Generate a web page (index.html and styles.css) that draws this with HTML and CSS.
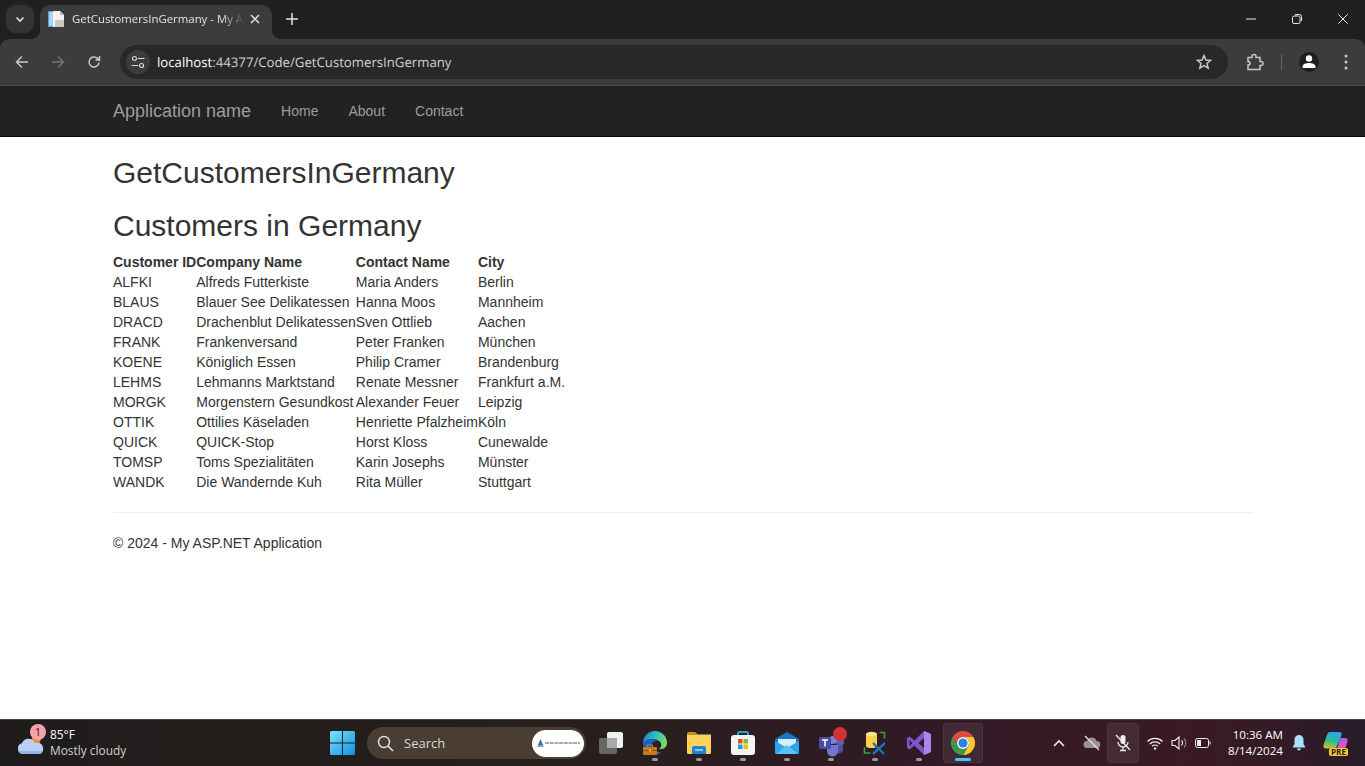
FILE: index.html
```html
<!DOCTYPE html>
<html lang="en">
<head>
    <meta charset="UTF-8">
    <meta name="viewport" content="width=device-width, initial-scale=1.0">
    <title>GetCustomersInGermany - My ASP.NET Application</title>
    <link rel="stylesheet" href="styles.css">
</head>
<body>

<header class="chrome">
<div class="tabstrip">
    <div class="tab-search">
        <svg width="12" height="12" viewBox="0 0 12 12"><path d="M2.5 4.5 6 8l3.500-3.500" fill="none" stroke="#e3e3e3" stroke-width="1.600"/></svg>
    </div>
    <div class="tab">
        <svg class="favicon" width="16" height="16" viewBox="0 0 16 16">
            <rect x="0" y="0" width="6" height="16" fill="#4a9fdc"/>
            <rect x="1" y="1" width="4" height="14" fill="#a9d3ef"/>
            <path d="M5 0h7l4 4v12H5z" fill="#f3f3f3"/>
            <path d="M7 9h9v7H7z" fill="#c9c9c9"/>
            <path d="M12 0v4h4z" fill="#bdbdbd"/>
        </svg>
        <span class="tab-title">GetCustomersInGermany - My ASP.NET Application</span>
        <svg class="tab-close" width="10" height="10" viewBox="0 0 10 10"><path d="M1 1l8 8M9 1l-8 8" stroke="#e3e3e3" stroke-width="1.500"/></svg>
    </div>
    <svg class="new-tab" width="12" height="12" viewBox="0 0 12 12"><path d="M6 0v12M0 6h12" stroke="#e3e3e3" stroke-width="1.500"/></svg>
    <div class="window-btns">
        <svg width="10" height="10" viewBox="0 0 10 10"><path d="M0 5h10" stroke="#e8e8e8" stroke-width="1"/></svg>
        <svg width="10" height="10" viewBox="0 0 10 10"><rect x=".5" y="2" width="7.500" height="7.500" rx="1.500" fill="none" stroke="#e8e8e8"/><path d="M3 .5h4.500a2 2 0 0 1 2 2V7" fill="none" stroke="#e8e8e8"/></svg>
        <svg width="10" height="10" viewBox="0 0 10 10"><path d="M.3.3l9.400 9.400M9.700.3.300 9.700" stroke="#e8e8e8" stroke-width="1"/></svg>
    </div>
</div>

<div class="toolbar">
    <svg class="nav-icon" width="14" height="14" viewBox="0 0 14 14"><path d="M13 7H2M7 1.500 1.500 7 7 12.500" fill="none" stroke="#c7c7c7" stroke-width="1.500"/></svg>
    <svg class="nav-icon" width="14" height="14" viewBox="0 0 14 14"><path d="M1 7h11M7 1.500 12.500 7 7 12.500" fill="none" stroke="#757575" stroke-width="1.500"/></svg>
    <svg class="nav-icon" width="14" height="14" viewBox="0 0 14 14"><path d="M12 7.500A5 5 0 1 1 10.500 3.400L12.500 5M12.500 1v4h-4" fill="none" stroke="#c7c7c7" stroke-width="1.500"/></svg>
    <div class="omnibox">
        <div class="site-info">
            <svg width="14" height="14" viewBox="0 0 14 14"><g fill="none" stroke="#dcdcdc" stroke-width="1.200"><circle cx="3.500" cy="3.500" r="2"/><path d="M7 3.500h6.500M.5 10.500H7"/><circle cx="10.500" cy="10.500" r="2"/></g></svg>
        </div>
        <div class="url"><span class="url-host">localhost</span>:44377/Code/GetCustomersInGermany</div>
        <svg class="star" width="16" height="16" viewBox="0 0 16 16"><path d="M8 1.500 9.900 6l4.800.4-3.700 3.100 1.200 4.700L8 11.700l-4.200 2.500L5 9.500 1.300 6.400 6.100 6z" fill="none" stroke="#c7c7c7" stroke-width="1.500"/></svg>
    </div>
    <svg class="ext" width="18" height="18" viewBox="0 0 18 18"><path d="M2 4h4V3a2 2 0 0 1 4 0v1h4v4h1a2 2 0 0 1 0 4h-1v4H2v-4.500h1a2 2 0 0 0 0-3.500H2z" fill="none" stroke="#c7c7c7" stroke-width="1.500" transform="translate(0 .500)"/></svg>
    <div class="sep"></div>
    <div class="avatar">
        <svg width="20" height="20" viewBox="0 0 20 20"><circle cx="10" cy="6.500" r="3.200" fill="#fff"/><path d="M3.500 16v-1.500C3.500 12 7 11 10 11s6.500 1 6.500 3.500V16z" fill="#fff"/></svg>
    </div>
    <svg class="menu" width="4" height="16" viewBox="0 0 4 16"><circle cx="2" cy="2" r="1.500" fill="#c7c7c7"/><circle cx="2" cy="8" r="1.500" fill="#c7c7c7"/><circle cx="2" cy="14" r="1.500" fill="#c7c7c7"/></svg>
</div>
</header>

<nav class="navbar">
    <div class="container navbar-inner">
        <a class="brand">Application name</a>
        <a class="nav-link">Home</a>
        <a class="nav-link">About</a>
        <a class="nav-link">Contact</a>
    </div>
</nav>

<main class="container body-content">
    <h2>GetCustomersInGermany</h2>
    <h2>Customers in Germany</h2>
    <table>
        <thead>
            <tr><th>Customer ID</th><th>Company Name</th><th>Contact Name</th><th>City</th></tr>
        </thead>
        <tbody>
            <tr><td>ALFKI</td><td>Alfreds Futterkiste</td><td>Maria Anders</td><td>Berlin</td></tr>
            <tr><td>BLAUS</td><td>Blauer See Delikatessen</td><td>Hanna Moos</td><td>Mannheim</td></tr>
            <tr><td>DRACD</td><td>Drachenblut Delikatessen</td><td>Sven Ottlieb</td><td>Aachen</td></tr>
            <tr><td>FRANK</td><td>Frankenversand</td><td>Peter Franken</td><td>München</td></tr>
            <tr><td>KOENE</td><td>Königlich Essen</td><td>Philip Cramer</td><td>Brandenburg</td></tr>
            <tr><td>LEHMS</td><td>Lehmanns Marktstand</td><td>Renate Messner</td><td>Frankfurt a.M.</td></tr>
            <tr><td>MORGK</td><td>Morgenstern Gesundkost</td><td>Alexander Feuer</td><td>Leipzig</td></tr>
            <tr><td>OTTIK</td><td>Ottilies Käseladen</td><td>Henriette Pfalzheim</td><td>Köln</td></tr>
            <tr><td>QUICK</td><td>QUICK-Stop</td><td>Horst Kloss</td><td>Cunewalde</td></tr>
            <tr><td>TOMSP</td><td>Toms Spezialitäten</td><td>Karin Josephs</td><td>Münster</td></tr>
            <tr><td>WANDK</td><td>Die Wandernde Kuh</td><td>Rita Müller</td><td>Stuttgart</td></tr>
        </tbody>
    </table>
    <hr>
    <footer>&copy; 2024 - My ASP.NET Application</footer>
</main>

<div class="taskbar">
    <div class="weather">
        <div class="weather-icon">
            <svg width="28" height="22" viewBox="0 0 28 22"><circle cx="19" cy="6" r="4.500" fill="#e8883a"/><path d="M6 20a5.500 5.500 0 0 1-1-10.800A7 7 0 0 1 18 9a5.500 5.500 0 0 1 4.500 11z" fill="#b9d0f2"/><path d="M6 20c-2 0-4-1-5-3h25c-1 2-2 3-4 3z" fill="#8fb4e6"/></svg>
            <span class="badge">1</span>
        </div>
        <div class="weather-text">
            <div class="temp">85°F</div>
            <div class="cond">Mostly cloudy</div>
        </div>
    </div>
    <div class="start">
        <svg width="25" height="24" viewBox="0 0 25 24">
            <defs><linearGradient id="win" x1="0" y1="0" x2="1" y2="1"><stop offset="0" stop-color="#7ce3fb"/><stop offset="1" stop-color="#0f8fe6"/></linearGradient></defs>
            <path d="M0 1.500A1.500 1.500 0 0 1 1.500 0H12v11.500H0zM13 0h10.500A1.500 1.500 0 0 1 25 1.500v10H13zM0 12.500h12V24H1.500A1.500 1.500 0 0 1 0 22.500zM13 12.500h12v10a1.500 1.500 0 0 1-1.500 1.500H13z" fill="url(#win)"/>
        </svg>
    </div>
    <div class="search">
        <svg width="17" height="17" viewBox="0 0 17 17"><circle cx="7" cy="7" r="5.500" fill="none" stroke="#e6e6e6" stroke-width="1.400"/><path d="M11 11l5 5" stroke="#e6e6e6" stroke-width="1.600"/></svg>
        <span class="search-label">Search</span>
        <div class="search-pic">
            <svg width="44" height="10" viewBox="0 0 44 10"><path d="M4.500 1l2.500 6H2z" fill="#1d6fb8"/><path d="M1.500 7.500h6v1h-6z" fill="#1d3f7a"/><path d="M9 5h35" stroke="#555" stroke-width="1" stroke-dasharray="4 .7"/></svg>
        </div>
    </div>
    <div class="task-icons">
        <div class="task-icon">
            <svg width="24" height="22" viewBox="0 0 24 22"><rect x="0" y="6" width="18" height="16" rx="2" fill="#666"/><rect x="8" y="0" width="16" height="16" rx="2" fill="#f1f1f1"/><rect x="8" y="6" width="10" height="10" fill="#a8a8a8"/></svg>
        </div>
        <div class="task-icon open">
            <svg width="24" height="24" viewBox="0 0 24 24">
                <defs><linearGradient id="edge" x1="0" y1=".3" x2="1" y2=".5"><stop offset="0" stop-color="#1a7fd0"/><stop offset=".5" stop-color="#2cc3c0"/><stop offset="1" stop-color="#7fdc5a"/></linearGradient></defs>
                <path d="M0 12a12 12 0 0 1 24 0c0 4-4 7-8 6 3-2 3-6 0-8-4-3-11-3-16 2z" fill="url(#edge)"/>
                <path d="M0 12c4-5 11-5 14-2-4 0-6 3-5 6 1 3 5 5 9 5-3 3-6 3-6 3C5 24 0 18 0 12z" fill="#1565c0"/>
                <rect x="0" y="16" width="14" height="8" rx="1" fill="#c87a1e"/>
                <rect x="4.500" y="14" width="5" height="3" fill="none" stroke="#c87a1e"/>
                <path d="M0 19.500h14" stroke="#8f5210"/>
                <path d="M6 19.500h2" stroke="#f4c27a" stroke-width="1.600"/>
            </svg>
        </div>
        <div class="task-icon open">
            <svg width="24" height="22" viewBox="0 0 24 22"><path d="M0 1.500A1.500 1.500 0 0 1 1.500 0H8l3 2.500H0z" fill="#c98e14"/><path d="M0 2.500h24v18a1.500 1.500 0 0 1-1.500 1.500h-21A1.500 1.500 0 0 1 0 20.500z" fill="#fbd25a"/><path d="M7 14h10a2 2 0 0 1 2 2v6H5v-6a2 2 0 0 1 2-2z" fill="#1f86cc"/><rect x="8" y="17" width="8" height="2" fill="#7cc8f2"/></svg>
        </div>
        <div class="task-icon open">
            <svg width="24" height="24" viewBox="0 0 24 24"><path d="M7 5V2.500A1.500 1.500 0 0 1 8.500 1h7A1.500 1.500 0 0 1 17 2.500V5" fill="none" stroke="#29a3e0" stroke-width="2"/><rect x="0" y="4" width="24" height="20" rx="3" fill="#f4f4f4"/><rect x="7" y="8" width="4.500" height="4.500" fill="#e8492b"/><rect x="12.500" y="8" width="4.500" height="4.500" fill="#7db82d"/><rect x="7" y="13.500" width="4.500" height="4.500" fill="#1e9be0"/><rect x="12.500" y="13.500" width="4.500" height="4.500" fill="#f7b90f"/></svg>
        </div>
        <div class="task-icon open">
            <svg width="24" height="22" viewBox="0 0 24 22"><path d="M0 7 12 0l12 7v13.500a1.500 1.500 0 0 1-1.500 1.500h-21A1.500 1.500 0 0 1 0 20.500z" fill="#1478c8"/><path d="M3 7h18v6l-9 5-9-5z" fill="#d4eefa"/><path d="M0 9l12 7 12-7v11.500a1.500 1.500 0 0 1-1.500 1.500h-21A1.500 1.500 0 0 1 0 20.500z" fill="#2aa4ea"/><path d="M1 22 12 13l11 9z" fill="#5cc3f5"/></svg>
        </div>
        <div class="task-icon open">
            <svg width="32" height="32" viewBox="0 0 32 32"><circle cx="25" cy="15" r="4" fill="#5d5fb5"/><circle cx="18" cy="13" r="4" fill="#7b83d4"/><path d="M21 19h7v4a4 4 0 0 1-7 2z" fill="#4f519f"/><path d="M12 18h11v6a5.500 5.500 0 0 1-11 0z" fill="#7276cc"/><rect x="4" y="10" width="12" height="12" rx="1.500" fill="#4a4da6"/><path d="M7 13h6M10 13v6.500" stroke="#fff" stroke-width="1.500"/><circle cx="25" cy="7" r="7" fill="#d13438"/></svg>
        </div>
        <div class="task-icon open">
            <svg width="24" height="24" viewBox="0 0 24 24"><path d="M3 3h11v12H3z" fill="#f7d34a"/><ellipse cx="8.500" cy="3" rx="5.500" ry="2.200" fill="#f9e58a"/><ellipse cx="8.500" cy="15" rx="5.500" ry="2" fill="#f7d34a"/><path d="M16.500 1.500h5v6M1.500 16v6h6" fill="none" stroke="#2f9e44" stroke-width="1.600"/><path d="M10 12l11 11M22 12 10 23" stroke="#1d6fb8" stroke-width="2.400"/></svg>
        </div>
        <div class="task-icon open">
            <svg width="24" height="24" viewBox="0 0 24 24"><path fill-rule="evenodd" d="M17 0l7 3v18l-7 3-9.500-9.500L2.500 18.500 0 17V7l2.500-1.500 5 4zM17 7l-5.500 5 5.500 5zM2.500 9v6l3-3z" fill="#7d55c8"/><path fill-rule="evenodd" d="M17 0l7 3v18l-7 3z" fill="#ab85ee"/></svg>
        </div>
        <div class="task-icon active">
            <svg width="24" height="24" viewBox="0 0 24 24"><path d="M12 6h10.400A12 12 0 0 0 1.600 6l5.200 9A6 6 0 0 1 12 6z" fill="#dd4b3a"/><path d="M22.400 6A12 12 0 0 1 12 24l5.200-9A6 6 0 0 0 12 6z" fill="#f7c631"/><path d="M12 24A12 12 0 0 1 1.600 6l5.200 9a6 6 0 0 0 10.400 0z" fill="#3b9a4a"/><circle cx="12" cy="12" r="6" fill="#fff"/><circle cx="12" cy="12" r="4.600" fill="#2f7fe6"/></svg>
        </div>
    </div>
    <div class="tray">
        <svg width="12" height="8" viewBox="0 0 12 8"><path d="M1 7l5-5 5 5" fill="none" stroke="#eee" stroke-width="1.600"/></svg>
        <svg class="tray-cloud" width="18" height="16" viewBox="0 0 18 16"><path d="M4 13a3.500 3.500 0 0 1 0-7 5 5 0 0 1 9.500 0 3.500 3.500 0 0 1 .5 7z" fill="#9a9292"/><path d="M2 1l14 14" stroke="#e8e8e8" stroke-width="1.300"/></svg>
        <div class="tray-mic">
            <svg width="16" height="18" viewBox="0 0 16 18"><rect x="5.500" y="1" width="5" height="9" rx="2.500" fill="#eee"/><path d="M3 8a5 5 0 0 0 10 0M8 13v3M5 16.500h6" fill="none" stroke="#eee" stroke-width="1.300"/><path d="M1 1l14 15" stroke="#eee" stroke-width="1.300"/></svg>
        </div>
        <svg class="tray-wifi" width="16" height="13" viewBox="0 0 16 13"><g fill="none" stroke="#eee" stroke-width="1.200"><path d="M.5 4.500a10.500 10.500 0 0 1 15 0M2.800 7a7.200 7.200 0 0 1 10.400 0M5.200 9.300a4 4 0 0 1 5.600 0"/></g><circle cx="8" cy="11.500" r="1.200" fill="#eee"/></svg>
        <svg class="tray-vol" width="17" height="14" viewBox="0 0 17 14"><path d="M1 4.500h3L8 1v12L4 9.500H1z" fill="none" stroke="#eee" stroke-width="1.100"/><path d="M10.500 4.500a3.500 3.500 0 0 1 0 5" fill="none" stroke="#eee" stroke-width="1.100"/><path d="M13 2.500a6.500 6.500 0 0 1 0 9" fill="none" stroke="#888" stroke-width="1.100"/></svg>
        <svg class="tray-bat" width="16" height="10" viewBox="0 0 16 10"><rect x=".5" y=".5" width="13" height="9" rx="2" fill="none" stroke="#eee"/><rect x="2" y="2" width="4" height="6" fill="#eee"/><path d="M14.500 3.500h1v3h-1z" fill="#eee"/></svg>
        <div class="clock">
            <div>10:36 AM</div>
            <div>8/14/2024</div>
        </div>
        <svg class="bell" width="14" height="16" viewBox="0 0 14 16"><path d="M7 0a4.500 4.500 0 0 1 4.500 4.500V9l2 3.500H.5l2-3.500V4.500A4.500 4.500 0 0 1 7 0z" fill="#a8e2fb"/><path d="M5 13.500h4a2 2 0 0 1-4 0z" fill="#a8e2fb"/></svg>
        <div class="copilot">
            <svg width="25" height="17" viewBox="0 0 25 17">
                <defs>
                    <linearGradient id="cop-left" x1=".5" y1="0" x2=".2" y2="1"><stop offset="0" stop-color="#27a9e8"/><stop offset=".55" stop-color="#2fc08a"/><stop offset="1" stop-color="#e8b52a"/></linearGradient>
                    <linearGradient id="cop-right" x1=".3" y1="0" x2=".8" y2="1"><stop offset="0" stop-color="#9a5df0"/><stop offset="1" stop-color="#f056b0"/></linearGradient>
                </defs>
                <path d="M7 0h9c2 0 3 1 2.500 3L14 14c-.5 1.500-2 2.500-3.500 2.500H3c-2 0-3-1.500-2.500-3.500L4 3C4.500 1 5.500 0 7 0z" fill="url(#cop-left)"/>
                <path d="M17 6h5c2 0 3 1.500 2.500 3.500l-1.500 5c-.5 1.500-2 2-3.500 2H12c1.500 0 2.500-1 3-2.500z" fill="url(#cop-right)"/>
            </svg>
            <span class="pre">PRE</span>
        </div>
    </div>
</div>

</body>
</html>
```

FILE: styles.css
```css
html, body {
    margin: 0;
    height: 100%;
    overflow: hidden;
}

body {
    display: flex;
    flex-direction: column;
    height: 766px;
    background: #fff;
    font-family: "Liberation Sans", Arial, sans-serif;
    font-size: 14px;
    line-height: 20px;
    color: #333;
}

/* browser chrome */
.chrome {
    flex: none;
    background: #1f2020;
    font-family: "Open Sans", sans-serif;
}

.tabstrip {
    display: flex;
    align-items: flex-start;
    height: 39px;
    padding: 5px 0 0 6px;
    box-sizing: border-box;
}

.tab-search {
    width: 28px;
    height: 28px;
    border-radius: 9px;
    background: #333534;
    display: flex;
    align-items: center;
    justify-content: center;
}

.tab {
    position: relative;
    display: flex;
    align-items: center;
    width: 232px;
    height: 34px;
    margin-left: 6px;
    padding: 0 10px 6px 8px;
    box-sizing: border-box;
    background: #3c3c3c;
    border-radius: 10px 10px 0 0;
}

.tab::before,
.tab::after {
    content: "";
    position: absolute;
    bottom: 0;
    width: 8px;
    height: 8px;
}

.tab::before {
    left: -8px;
    background: radial-gradient(circle at 0 0, transparent 7.500px, #3c3c3c 8px);
}

.tab::after {
    right: -8px;
    background: radial-gradient(circle at 100% 0, transparent 7.500px, #3c3c3c 8px);
}

.tab-title {
    flex: 1;
    margin-left: 8px;
    font-size: 11.400px;
    color: #e3e3e3;
    white-space: nowrap;
    overflow: hidden;
    -webkit-mask-image: linear-gradient(90deg, #000 150px, transparent 172px);
    mask-image: linear-gradient(90deg, #000 150px, transparent 172px);
}

.tab-close {
    margin: 0 2px 0 6px;
}

.new-tab {
    margin: 8px 0 0 14px;
}

.window-btns {
    display: flex;
    gap: 36px;
    margin: 9px 17px 0 auto;
    align-items: center;
}

.toolbar {
    display: flex;
    align-items: center;
    height: 47px;
    box-sizing: border-box;
    padding: 0 0 0 15px;
    background: #3c3c3c;
    border-radius: 9px 9px 0 0;
    border-bottom: 1px solid #4d4d4d;
}

.nav-icon {
    margin-right: 22px;
}

.nav-icon:nth-child(3) {
    margin-right: 19px;
}

.omnibox {
    display: flex;
    align-items: center;
    width: 1108px;
    height: 34px;
    background: #282828;
    border-radius: 17px;
    flex: none;
    padding: 0 16px 0 6px;
    box-sizing: border-box;
}

.site-info {
    width: 24px;
    height: 24px;
    border-radius: 50%;
    background: #3c3c3c;
    display: flex;
    align-items: center;
    justify-content: center;
}

.url {
    flex: 1;
    margin-left: 7px;
    font-size: 13.200px;
    text-rendering: geometricPrecision;
    color: #d0d0d0;
}

.url-host {
    color: #fff;
}

.ext {
    margin-left: 18px;
}

.sep {
    width: 1px;
    height: 16px;
    background: #666;
    margin-left: 17px;
}

.avatar {
    width: 20px;
    height: 20px;
    border-radius: 50%;
    background: #1f1f1f;
    margin-left: 17px;
    display: flex;
    align-items: center;
    justify-content: center;
}

.menu {
    margin-left: 25px;
}

/* page */
.container {
    width: 1140px;
    margin-left: 113px;
}

.navbar {
    height: 51px;
    flex: none;
    box-sizing: border-box;
    background: #222;
    border-bottom: 1px solid #080808;
}

.navbar-inner {
    display: flex;
    align-items: center;
    height: 50px;
}

.navbar a {
    color: #9d9d9d;
}

.brand {
    font-size: 18px;
    margin-right: 15px;
}

.nav-link {
    padding: 0 15px;
}

.body-content {
    flex: 1;
    overflow: hidden;
}

h2 {
    font-size: 30px;
    font-weight: 500;
    line-height: 33px;
    margin: 20px 0 10px;
}

.body-content h2:first-child {
    margin-top: 19px;
}

table {
    border-collapse: collapse;
    border-spacing: 0;
}

th, td {
    padding: 0;
    text-align: left;
}

hr {
    border: 0;
    border-top: 1px solid #eee;
    margin: 20px 0;
}

/* windows taskbar */
.taskbar {
    display: flex;
    align-items: center;
    height: 47px;
    flex: none;
    box-sizing: border-box;
    border-top: 1px solid #414141;
    background: linear-gradient(90deg, #1e1c1b 0%, #27201c 40%, #321a26 70%, #3a1a22 88%, #2a1c2a 100%);
    font-family: "Open Sans", sans-serif;
    color: #fff;
}

.weather {
    display: flex;
    align-items: center;
    width: 330px;
    flex: none;
    box-sizing: border-box;
    padding-left: 17px;
}

.weather-icon {
    position: relative;
    width: 28px;
    height: 22px;
    margin-top: 4px;
}

.badge {
    position: absolute;
    left: 13px;
    top: -10px;
    width: 16px;
    height: 16px;
    border-radius: 50%;
    background: #f7a1ab;
    color: #222;
    font-size: 11px;
    line-height: 16px;
    text-align: center;
}

.weather-text {
    margin: 0 0 2px 5px;
    font-size: 11.900px;
    line-height: 16px;
}

.cond {
    color: #d0d0d0;
}

.start {
    display: flex;
    width: 25px;
    flex: none;
}

.search {
    display: flex;
    align-items: center;
    width: 219px;
    height: 32px;
    margin-left: 12px;
    flex: none;
    box-sizing: border-box;
    padding: 0 2px 0 10px;
    border-radius: 16px;
    background: #4a3d33;
}

.search-label {
    margin-left: 10px;
    font-size: 13px;
    color: #d8d8d8;
    flex: 1;
}

.search-pic {
    width: 52px;
    height: 27px;
    border-radius: 14px;
    background: #fff;
    display: flex;
    align-items: center;
    justify-content: center;
}

.task-icons {
    display: flex;
    margin-left: 3px;
}

.task-icon {
    position: relative;
    display: flex;
    align-items: center;
    justify-content: center;
    width: 40px;
    height: 40px;
    margin: 0 2px;
    box-sizing: border-box;
}

.task-icon.open::after {
    content: "";
    position: absolute;
    left: 17px;
    bottom: 2px;
    width: 6px;
    height: 3px;
    border-radius: 2px;
    background: #9a9a9a;
}

.task-icon.active {
    background: rgba(255, 255, 255, 0.07);
    border: 1px solid rgba(255, 255, 255, 0.05);
    border-radius: 4px;
}

.task-icon.active::after {
    content: "";
    position: absolute;
    left: 11px;
    bottom: 1px;
    width: 16px;
    height: 3px;
    border-radius: 2px;
    background: #4cc2ff;
}

.tray {
    display: flex;
    align-items: center;
    margin-left: auto;
    padding-right: 17px;
}

.tray-cloud {
    margin-left: 18px;
}

.tray-mic {
    display: flex;
    align-items: center;
    justify-content: center;
    width: 32px;
    height: 40px;
    margin-left: 6px;
    box-sizing: border-box;
    border: 1px solid rgba(255, 255, 255, 0.05);
    border-radius: 4px;
    background: rgba(255, 255, 255, 0.07);
}

.tray-wifi {
    margin-left: 8px;
}

.tray-vol {
    margin-left: 8px;
}

.tray-bat {
    margin-left: 7px;
}

.clock {
    width: 55px;
    margin-left: 17px;
    font-size: 11.600px;
    line-height: 16px;
    text-align: right;
    white-space: nowrap;
}

.bell {
    margin-left: 9px;
}

.copilot {
    position: relative;
    width: 25px;
    height: 24px;
    margin: 2px 0 0 17px;
}

.copilot svg {
    display: block;
}

.pre {
    position: absolute;
    left: 6px;
    right: 0;
    bottom: 0;
    background: #f7c631;
    color: #222;
    font-size: 8px;
    font-weight: 700;
    line-height: 8px;
    text-align: center;
    border-radius: 2px;
}
```
